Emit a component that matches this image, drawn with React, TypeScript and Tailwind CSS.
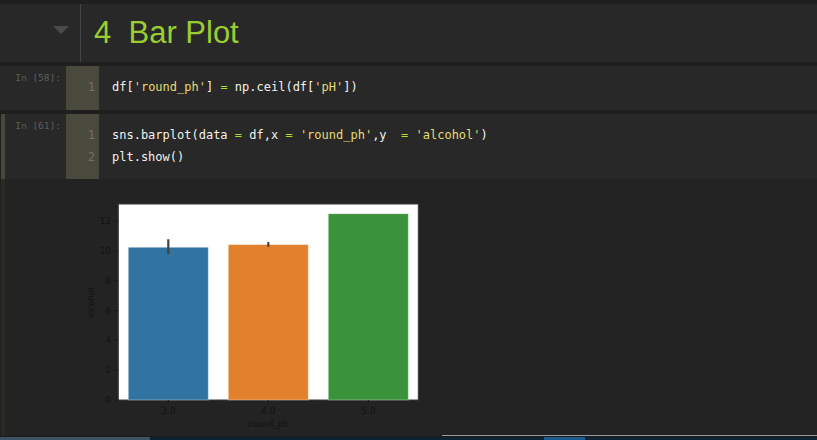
import React from "react";

type Tok = [string, "t" | "s" | "o"];

const tokColor: Record<string, string> = {
  t: "text-[#f2f2ec]",
  s: "text-[#e6db74]",
  o: "text-[#a6e22e]",
};

const CodeLine = ({ toks }: { toks: Tok[] }) => (
  <div className="whitespace-pre">
    {toks.map(([text, kind], i) => (
      <span key={i} className={tokColor[kind]}>
        {text}
      </span>
    ))}
  </div>
);

const cell1: Tok[][] = [
  [
    ["df[", "t"],
    ["'round_ph'", "s"],
    ["] ", "t"],
    ["=", "o"],
    [" np.ceil(df[", "t"],
    ["'pH'", "s"],
    ["])", "t"],
  ],
];

const cell2: Tok[][] = [
  [
    ["sns.barplot(data ", "t"],
    ["=", "o"],
    [" df,x ", "t"],
    ["=", "o"],
    [" ", "t"],
    ["'round_ph'", "s"],
    [",y  ", "t"],
    ["=", "o"],
    [" ", "t"],
    ["'alcohol'", "s"],
    [")", "t"],
  ],
  [["plt.show()", "t"]],
];

function CodeCell({
  prompt,
  lines,
  promptWidth,
  pb,
}: {
  prompt: string;
  lines: Tok[][];
  promptWidth: string;
  pb: string;
}) {
  return (
    <div className="flex bg-[#282828]">
      <div
        className={`${promptWidth} shrink-0 pt-[6px] pr-[5px] text-right font-['DejaVu_Sans_Mono',monospace] text-[9.5px] leading-[12px] text-[#5e5e5e]`}
      >
        {prompt}
      </div>
      <div
        className={`w-[33px] shrink-0 bg-[#4a493e] pt-[10px] ${pb} pr-[4px] text-right font-['DejaVu_Sans_Mono',monospace] text-[12px] leading-[22px] text-[#74725f]`}
      >
        {lines.map((_, i) => (
          <div key={i}>{i + 1}</div>
        ))}
      </div>
      <div
        className={`pl-[13px] pt-[10px] ${pb} font-['DejaVu_Sans_Mono',monospace] text-[12px] leading-[22px]`}
      >
        {lines.map((l, i) => (
          <CodeLine key={i} toks={l} />
        ))}
      </div>
    </div>
  );
}

const y0 = 205;
const k = 14.9;
const yOf = (v: number) => y0 - v * k;

const bars = [
  { x: 88.3, v: 10.25, c: "#3274a1", lab: "3.0", err: [9.78, 10.79] },
  { x: 188.3, v: 10.43, c: "#e1812c", lab: "4.0", err: [10.29, 10.6] },
  { x: 288.3, v: 12.5, c: "#3a923a", lab: "5.0", err: null as number[] | null },
];

function BarChart() {
  return (
    <svg width="360" height="240" viewBox="0 0 360 240" fontFamily="DejaVu Sans, sans-serif">
      <rect x="38.3" y="9" width="300" height="196" fill="#ffffff" stroke="#3a3a3a" strokeWidth="1" />
      {bars.map((b) => (
        <g key={b.lab}>
          <rect
            x={b.x - 40}
            y={yOf(b.v)}
            width="80"
            height={y0 - yOf(b.v)}
            fill={b.c}
            stroke="#ffffff"
            strokeOpacity="0.35"
            strokeWidth="1"
          />
          {b.err && (
            <line
              x1={b.x}
              x2={b.x}
              y1={yOf(b.err[1])}
              y2={yOf(b.err[0])}
              stroke="#424242"
              strokeWidth="2.2"
            />
          )}
          <line x1={b.x} x2={b.x} y1={y0} y2={y0 + 3.5} stroke="#151515" strokeWidth="0.8" />
          <text x={b.x} y={219} fontSize="8.8" textAnchor="middle" fill="#121212">
            {b.lab}
          </text>
        </g>
      ))}
      {[0, 2, 4, 6, 8, 10, 12].map((t) => (
        <g key={t}>
          <line x1="34.5" x2="38.3" y1={yOf(t)} y2={yOf(t)} stroke="#151515" strokeWidth="0.8" />
          <text x="31" y={yOf(t) + 3} fontSize="8.8" textAnchor="end" fill="#121212">
            {t}
          </text>
        </g>
      ))}
      <text x="188.3" y="232" fontSize="8.8" textAnchor="middle" fill="#121212">
        round_ph
      </text>
      <text
        x="0"
        y="0"
        fontSize="8.8"
        textAnchor="middle"
        fill="#121212"
        transform="translate(14 108) rotate(-90)"
      >
        alcohol
      </text>
    </svg>
  );
}

export default function App() {
  return (
    <div className="flex h-[440px] w-[817px] flex-col overflow-hidden bg-[#1f1f1f] pt-[4px]">
      {/* heading cell */}
      <div className="flex h-[58px] shrink-0 bg-[#282828]">
        <div className="flex w-[81px] shrink-0 justify-end border-r border-[#444444] pr-[11px] pt-[22px]">
          <div className="h-0 w-0 border-x-[8px] border-t-[8px] border-x-transparent border-t-[#4b4b4b]" />
        </div>
        <div className="whitespace-pre pl-[13px] pt-[13px] font-['Liberation_Sans',Arial,sans-serif] text-[31px] leading-[31px] text-[#9acd32]">
          {"4  Bar Plot"}
        </div>
      </div>

      <div className="h-[4px] shrink-0" />

      <CodeCell prompt="In [58]:" lines={cell1} promptWidth="w-[66px]" pb="pb-[12px]" />

      <div className="h-[4px] shrink-0" />

      <div className="ml-[1px] border-l-[4px] border-[#48473d]">
        <CodeCell prompt="In [61]:" lines={cell2} promptWidth="w-[61px]" pb="pb-[11px]" />
      </div>

      {/* output */}
      <div className="ml-[1px] flex h-[256px] shrink-0 border-l-[4px] border-[#2b2a25] bg-[#232323]">
        <div className="ml-[75px] mt-[16px]">
          <BarChart />
        </div>
      </div>

      <div className="flex h-[1px] shrink-0">
        <div className="w-[442px] bg-[#232323]" />
        <div className="flex-1 bg-[#9a9a9a]" />
      </div>
      <div className="h-[1px] shrink-0 bg-[#1c1c1c]" />
      <div className="flex h-[3px] shrink-0 bg-[#0d2436]">
        <div className="w-[150px] bg-[#3d5265]" />
        <div className="ml-[394px] w-[41px] bg-[#1d5a8a]" />
      </div>
    </div>
  );
}
